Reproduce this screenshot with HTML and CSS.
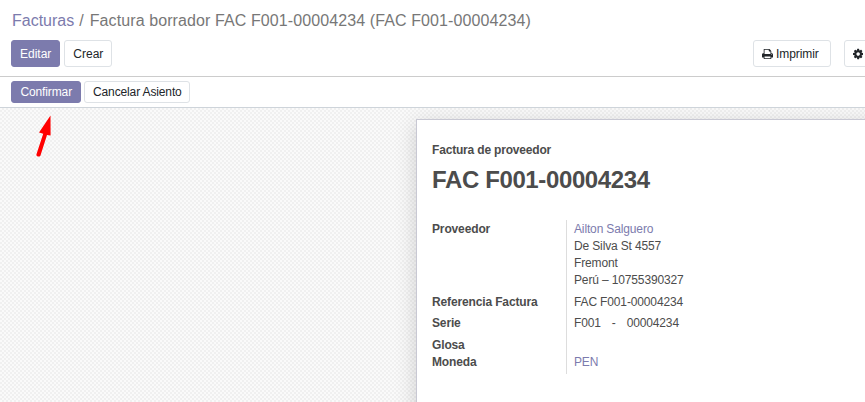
FILE: index.html
```html
<!DOCTYPE html>
<html lang="es">
<head>
<meta charset="utf-8">
<title>Facturas</title>
<link rel="stylesheet" href="styles.css">
</head>
<body>
<header class="control-panel">
  <div class="breadcrumb"><a class="link">Facturas</a><span class="sep">/</span><span class="current">Factura borrador FAC F001-00004234 (FAC F001-00004234)</span></div>
  <div class="toolbar">
    <button class="btn primary">Editar</button>
    <button class="btn">Crear</button>
    <div class="tools">
      <button class="btn print"><svg class="icon" viewBox="0 0 1664 1792" width="11" height="12"><path d="M384 1536h896v-256H384v256zm0-640h896V512h-160q-40 0-68-28t-28-68V256H384v640zm1152 64q0-26-19-45t-45-19-45 19-19 45 19 45 45 19 45-19 19-45zm128 0v416q0 13-9.500 22.500t-22.500 9.500h-224v160q0 40-28 68t-68 28H352q-40 0-68-28t-28-68v-160H32q-13 0-22.500-9.500T0 1376V960q0-79 56.500-135.500T192 768h64V224q0-40 28-68t68-28h672q40 0 88 20t76 48l152 152q28 28 48 76t20 88v256h64q79 0 135.500 56.500T1664 960z"/></svg>Imprimir</button>
      <button class="btn action"><svg class="icon" viewBox="0 0 1536 1792" width="10.300" height="12"><path d="M1024 896q0-106-75-181t-181-75-181 75-75 181 75 181 181 75 181-75 75-181zm512-109v222q0 12-8 23t-20 13l-185 28q-19 54-39 91 35 50 107 138 10 12 10 25t-9 23q-27 37-99 108t-94 71q-12 0-26-9l-138-108q-44 23-91 38-16 136-29 186-7 28-36 28H657q-14 0-24.500-8.500T621 1635l-28-184q-49-16-90-37l-141 107q-10 9-25 9-14 0-25-11-126-114-165-168-7-10-7-23 0-12 8-23 15-21 51-66.500t54-70.500q-27-50-41-99L29 1041q-13-2-21-12.500T0 1005V783q0-12 8-23t19-13l186-28q14-46 39-92-40-57-107-138-10-12-10-24 0-10 9-23 26-36 98.500-107.500T337 263q13 0 26 10l138 107q44-23 91-38 16-136 29-186 7-28 36-28h222q14 0 24.500 8.500T915 157l28 184q49 16 90 37l142-107q9-9 24-9 13 0 25 10 129 119 165 170 7 8 7 22 0 12-8 23-15 21-51 66.500t-54 70.500q26 50 41 98l183 28q13 2 21 12.500t8 23.500z"/></svg></button>
    </div>
  </div>
</header>
<div class="statusbar">
  <button class="btn primary small">Confirmar</button>
  <button class="btn small">Cancelar Asiento</button>
</div>
<main class="form-view">
  <svg class="arrow" width="20" height="46" viewBox="0 0 20 46"><path d="M17.500 5.500 6 22.500l4.200 1.300L3.400 44.500q-.2 1.600 1.300 2t2.700-.8L14 25l3.600.6z" fill="#f00"/></svg>
  <section class="sheet">
    <div class="kind">Factura de proveedor</div>
    <h1>FAC F001-00004234</h1>
    <dl class="fields">
      <dt class="address">Proveedor</dt>
      <dd class="address"><a class="link">Ailton Salguero</a><br>De Silva St 4557<br>Fremont<br>Perú – 10755390327</dd>
      <dt class="reference">Referencia Factura</dt><dd class="reference">FAC F001-00004234</dd>
      <dt class="series">Serie</dt><dd class="series"><span>F001</span><span>-</span><span>00004234</span></dd>
      <dt>Glosa</dt><dd></dd>
      <dt class="last">Moneda</dt><dd class="last"><a class="link">PEN</a></dd>
    </dl>
  </section>
</main>
</body>
</html>
```
FILE: styles.css
```css
* { box-sizing: border-box; }
body {
  margin: 0;
  height: 402px;
  overflow: hidden;
  display: flex;
  flex-direction: column;
  background: #fff;
  color: #4c4c4c;
  font: 12px/17px "Liberation Sans", Arial, sans-serif;
}
.link { color: #7c7bad; }
.control-panel {
  height: 77px;
  flex: none;
  padding: 8px 0 0 11px;
  border-bottom: 1px solid #ccc;
}
.breadcrumb {
  height: 32px;
  padding: 1px 0 0 1px;
  font-size: 16px;
  line-height: 24px;
  color: #777;
  white-space: nowrap;
}
.sep { margin: 0 6px 0 5px; }
.current { letter-spacing: .1px; }
.toolbar { display: flex; gap: 4px; }
.tools {
  display: flex;
  gap: 13px;
  margin-left: auto;
  margin-right: -10px;
}
.btn {
  height: 27px;
  padding: 1px 8px 0;
  border: 1px solid #dee2e6;
  border-radius: 3px;
  background: #fff;
  color: #212529;
  font: inherit;
  white-space: nowrap;
}
.btn.primary {
  border-color: #7c7bad;
  background: #7c7bad;
  color: #fff;
}
.btn.small { height: 22px; padding: 0 7.500px 0 8.500px; line-height: 18px; letter-spacing: -.13px; }
.icon { fill: currentColor; }
.print, .action { display: flex; align-items: center; gap: 3px; }
.print { width: 78px; letter-spacing: -.08px; }
.action { width: 31px; }
.statusbar {
  height: 31px;
  flex: none;
  display: flex;
  align-items: flex-start;
  gap: 3px;
  padding: 4px 11px 0;
  border-bottom: 1px solid #ced4da;
}
.form-view {
  position: relative;
  flex: 1;
  padding: 11px 0 0 416px;
  overflow: hidden;
  background: repeating-conic-gradient(#f0f0f0 0 25%, #fafafa 0 50%) 0 0 / 4px 4px;
}
.arrow {
  position: absolute;
  left: 33px;
  top: 2px;
  overflow: visible;
}
.sheet {
  width: 650px;
  height: 480px;
  padding: 22px 15px;
  border: 1px solid #c8c8d3;
  background: #fff;
  box-shadow: 0 5px 20px rgba(0, 0, 0, .17);
}
.kind { font-weight: bold; letter-spacing: -.18px; }
h1 {
  margin: 5px 0 24px;
  font-size: 24px;
  line-height: 32px;
  letter-spacing: -.38px;
}
.fields {
  display: grid;
  grid-template-columns: 135px 280px;
  margin: 0;
  letter-spacing: -.14px;
}
dt {
  padding-top: 1px;
  font-weight: bold;
  border-right: 1px solid #ddd;
}
dd { margin: 0; padding: 1px 0 0 7px; height: 17px; }
dt { height: 17px; }
.address { height: 73px; }
.reference { height: 21px; }
.series { height: 22px; }
dd.series { display: flex; gap: 11px; }
.last { height: 21px; }
```
